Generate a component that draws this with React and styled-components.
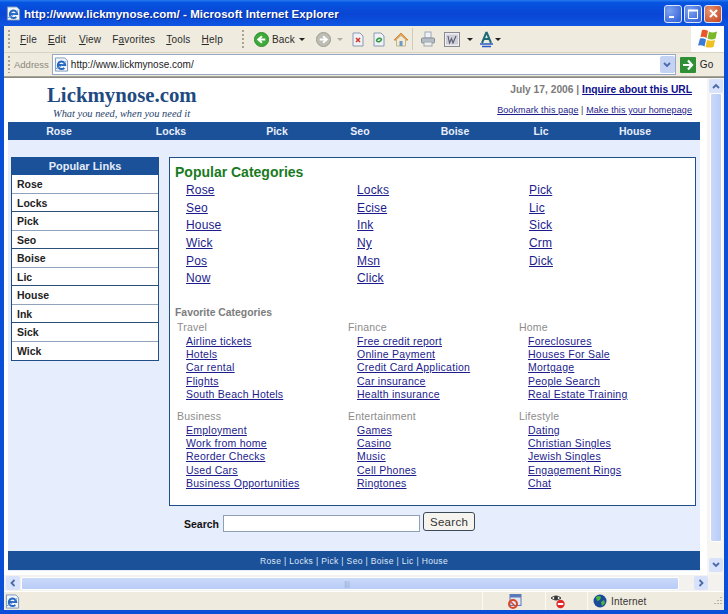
import styled, { createGlobalStyle } from 'styled-components';

const GlobalStyle = createGlobalStyle`
  html, body { margin: 0; padding: 0; background: #0a4fd8; }
  * { box-sizing: border-box; }
`;

const sans = `"Liberation Sans", Arial, sans-serif`;
const linkBlue = '#1c1c8c';

const navItems = [['Rose', 102], ['Locks', 122], ['Pick', 90], ['Seo', 76], ['Boise', 114], ['Lic', 58], ['House', 130]];
const sideLinks = ['Rose', 'Locks', 'Pick', 'Seo', 'Boise', 'Lic', 'House', 'Ink', 'Sick', 'Wick'];
const popular = ['Rose', 'Locks', 'Pick', 'Seo', 'Ecise', 'Lic', 'House', 'Ink', 'Sick', 'Wick', 'Ny', 'Crm', 'Pos', 'Msn', 'Dick', 'Now', 'Click'];
const favorites = [
  { title: 'Travel', links: ['Airline tickets', 'Hotels', 'Car rental', 'Flights', 'South Beach Hotels'] },
  { title: 'Finance', links: ['Free credit report', 'Online Payment', 'Credit Card Application', 'Car insurance', 'Health insurance'] },
  { title: 'Home', links: ['Foreclosures', 'Houses For Sale', 'Mortgage', 'People Search', 'Real Estate Training'] },
  { title: 'Business', links: ['Employment', 'Work from home', 'Reorder Checks', 'Used Cars', 'Business Opportunities'] },
  { title: 'Entertainment', links: ['Games', 'Casino', 'Music', 'Cell Phones', 'Ringtones'] },
  { title: 'Lifestyle', links: ['Dating', 'Christian Singles', 'Jewish Singles', 'Engagement Rings', 'Chat'] },
];

const Win = styled.div`
  width: 728px;
  height: 614px;
  display: flex;
  flex-direction: column;
  overflow: hidden;
  font-family: ${sans};
  background: #0a4fd8;
  padding: 0 4px 4px;
`;

const TitleBar = styled.div`
  height: 26px;
  margin: 0 -4px;
  padding: 1px 6px 0 6px;
  display: flex;
  align-items: center;
  background: linear-gradient(180deg, #2a7af0 0%, #0554e0 10%, #0a45d4 55%, #0c56e2 100%);
`;

const TitleText = styled.div`
  flex: 1;
  margin-left: 3px;
  color: #fff;
  font-size: 11.5px;
  font-weight: bold;
  letter-spacing: 0.06px;
  text-shadow: 1px 1px 0 #0a2a8a;
  white-space: nowrap;
`;

const WinButton = styled.div`
  width: 18px;
  height: 18px;
  margin-left: 2px;
  border: 1px solid #dce6fa;
  border-radius: 3px;
  display: flex;
  align-items: center;
  justify-content: center;
  background: ${p => (p.$close
    ? 'radial-gradient(circle at 30% 30%, #e8926e, #c4421e)'
    : 'radial-gradient(circle at 30% 30%, #7da2ee, #2a5ad8)')};
`;

const MenuRow = styled.div`
  height: 27px;
  display: flex;
  background: #efebde;
  border-bottom: 1px solid #d8d4c4;
`;

const Grip = styled.div`
  width: 2px;
  height: ${p => p.$h || 19}px;
  margin-left: ${p => p.$ml || 0}px;
  align-self: center;
  background: repeating-linear-gradient(180deg, #a8a493 0 2px, transparent 2px 4px);
`;

const MenuLabel = styled.span`
  margin-left: ${p => p.$ml}px;
  align-self: center;
  font-size: 10px;
  color: #2a2a2a;
  letter-spacing: 0.2px;
`;

const Tool = styled.div`
  margin-left: ${p => p.$ml || 0}px;
  align-self: center;
  display: flex;
  align-items: center;
`;

const Caret = styled.span`
  margin-left: ${p => p.$ml || 0}px;
  align-self: center;
  width: 0;
  height: 0;
  border-left: 3px solid transparent;
  border-right: 3px solid transparent;
  border-top: 3px solid ${p => p.$light ? '#b0aea2' : '#222'};
`;

const ToolSep = styled.div`
  width: 1px;
  height: 22px;
  margin-left: ${p => p.$ml}px;
  align-self: center;
  background: #cfcbba;
`;

const Spacer = styled.div`
  flex: 1;
`;

const LogoBox = styled.div`
  width: 33px;
  background: #fff;
  display: flex;
  align-items: center;
  justify-content: center;
`;

const AddressRow = styled.div`
  height: 24px;
  display: flex;
  align-items: center;
  background: #efebde;
  border-bottom: 1px solid #a5a297;
`;

const AddressLabel = styled.span`
  margin-left: 4px;
  font-size: 9.5px;
  color: #8b887c;
`;

const UrlField = styled.div`
  width: 624px;
  height: 21px;
  margin-left: 3px;
  padding-left: 1px;
  display: flex;
  align-items: center;
  gap: 2px;
  background: #fff;
  border: 1px solid #98a8c4;
  font-size: 10px;
  color: #222;
`;

const UrlText = styled.span`
  flex: 1;
`;

const Drop = styled.div`
  width: 15px;
  height: 17px;
  background: #c4d2f4;
  border-radius: 2px;
  display: flex;
  align-items: center;
  justify-content: center;
`;

const GoLabel = styled.span`
  margin-left: 4px;
  font-size: 10px;
  color: #222;
`;

const ViewRow = styled.div`
  flex: 1;
  display: flex;
  min-height: 0;
  border-top: 1px solid #8a8a80;
`;

const Page = styled.div`
  width: 703px;
  background: #fff;
  padding: 0 7px 4px 4px;
  display: flex;
  flex-direction: column;
`;

const Header = styled.div`
  height: 44px;
  display: flex;
  justify-content: space-between;
`;

const Brand = styled.div`
  padding: 5px 0 0 39px;
`;

const BrandName = styled.div`
  font-family: "Liberation Serif", "Times New Roman", serif;
  font-weight: bold;
  font-size: 20.8px;
  line-height: 24px;
  color: #1f4a82;
`;

const Tagline = styled.div`
  font-family: "Liberation Serif", "Times New Roman", serif;
  font-style: italic;
  font-size: 10.4px;
  line-height: 12px;
  margin: 1px 0 0 6px;
  color: #1f3f6e;
`;

const HeaderRight = styled.div`
  padding: 5px 8px 0 0;
  text-align: right;
`;

const DateLine = styled.div`
  font-size: 10.25px;
  line-height: 14px;
  font-weight: bold;
  color: #7a7a7a;
`;

const InquireLink = styled.a`
  color: #10108c;
  text-decoration: underline;
`;

const SmallLinks = styled.div`
  margin-top: 7px;
  font-size: 9px;
  line-height: 12px;
  color: #444;
  letter-spacing: 0.1px;
`;

const PlainLink = styled.a`
  color: ${linkBlue};
  text-decoration: underline;
`;

const NavBar = styled.div`
  height: 18px;
  display: grid;
  grid-template-columns: ${navItems.map(n => `${n[1]}px`).join(' ')};
  align-items: center;
  background: #1b5198;
`;

const NavItem = styled.div`
  text-align: center;
  font-size: 10.5px;
  font-weight: bold;
  color: #e8eefa;
`;

const Body = styled.div`
  flex: 1;
  display: flex;
  flex-direction: column;
  background: #e6edfc;
`;

const Columns = styled.div`
  display: flex;
  align-items: flex-start;
  gap: 10px;
  padding: 17px 4px 0 3px;
`;

const Sidebar = styled.div`
  width: 148px;
  border: 1px solid #1f4f86;
  border-top: none;
  background: #fff;
`;

const SideHead = styled.div`
  height: 18px;
  line-height: 18px;
  text-align: center;
  background: #1b5198;
  color: #e4ecfa;
  font-size: 11px;
  font-weight: bold;
`;

const SideLink = styled.div`
  height: 18.5px;
  line-height: 18px;
  padding-left: 5px;
  font-size: 10.5px;
  font-weight: bold;
  color: #222;
  border-bottom: 1px solid ${p => (p.$dark ? '#2a4f78' : '#8fa4bc')};
  &:last-child { border-bottom: none; }
`;

const MainBox = styled.div`
  width: 527px;
  height: 349px;
  border: 1px solid #1f4f86;
  background: #fff;
  padding: 6px 0 0 5px;
`;

const MainTitle = styled.div`
  font-size: 14px;
  line-height: 17px;
  font-weight: bold;
  color: #1a7a22;
`;

const PopularGrid = styled.div`
  display: grid;
  grid-template-columns: 171px 172px 160px;
  grid-auto-rows: 17.7px;
  margin: -1px 0 0 11px;
`;

const PopularLink = styled.a`
  font-size: 12px;
  line-height: 18px;
  letter-spacing: 0.15px;
  color: ${linkBlue};
  text-decoration: underline;
`;

const FavTitle = styled.div`
  margin-top: 20px;
  font-size: 10.4px;
  line-height: 13px;
  font-weight: bold;
  color: #7c7c7c;
`;

const FavGrid = styled.div`
  display: grid;
  grid-template-columns: 171px 171px 171px;
  row-gap: 9px;
  margin-top: 2px;
`;

const FavColumn = styled.div`
  display: flex;
  flex-direction: column;
  padding-left: 2px;
`;

const FavHead = styled.div`
  font-size: 10.5px;
  line-height: 13.6px;
  letter-spacing: 0.2px;
  color: #8c8c8c;
`;

const FavLink = styled.a`
  margin-left: 9px;
  font-size: 10.5px;
  line-height: 13.3px;
  letter-spacing: 0.25px;
  color: ${linkBlue};
  text-decoration: underline;
`;

const SearchRow = styled.div`
  display: flex;
  align-items: center;
  height: 20px;
  margin: 6px 0 0 176px;
`;

const SearchLabel = styled.span`
  font-size: 10.5px;
  font-weight: bold;
  color: #111;
  margin-top: 3px;
`;

const SearchInput = styled.input`
  width: 197px;
  height: 17px;
  margin: 3px 0 0 4px;
  padding: 0;
  border: 1px solid #8ea0b4;
  background: #fff;
`;

const SearchButton = styled.button`
  width: 52px;
  height: 19px;
  margin: -1px 0 0 3px;
  padding: 0;
  font-family: ${sans};
  font-size: 11.5px;
  letter-spacing: 0.3px;
  color: #333;
  background: #f6f4ee;
  border: 1px solid #3c4a58;
  border-radius: 3px;
`;

const Footer = styled.div`
  height: 19px;
  margin-top: 19px;
  display: flex;
  align-items: center;
  justify-content: center;
  background: #1b5198;
  color: #dfe8f8;
  font-size: 8.5px;
  letter-spacing: 0.35px;
`;

const VScroll = styled.div`
  width: 17px;
  background: #f6f5f1;
  display: flex;
  flex-direction: column;
  align-items: center;
  padding: 1px 0 3px;
`;

const ScrollBtn = styled.div`
  width: ${p => p.$w || 14}px;
  height: 14px;
  flex: none;
  background: #d8e2fa;
  border-radius: 2px;
  display: flex;
  align-items: center;
  justify-content: center;
`;

const VThumb = styled.div`
  flex: none;
  height: 449px;
  width: 12px;
  background: linear-gradient(90deg, #cbd9fa, #b8ccf6);
  border: 1px solid #fff;
  border-radius: 2px;
`;

const FlexFill = styled.div`
  flex: 1;
`;

const HScroll = styled.div`
  height: 16px;
  display: flex;
  align-items: center;
  padding: 0 16px 0 2px;
  background: #f3f2ee;
`;

const HThumb = styled.div`
  flex: 1;
  height: 13px;
  margin: 0 15px 0 1px;
  padding-right: 6px;
  display: flex;
  align-items: center;
  justify-content: center;
  background: linear-gradient(180deg, #cbd9fa, #b8ccf6);
  border: 1px solid #fff;
  border-radius: 2px;
  font-size: 7px;
  color: #8ea4cc;
`;

const StatusBar = styled.div`
  height: 19px;
  display: flex;
  align-items: center;
  background: #efebde;
  border-top: 1px solid #fff;
`;

const StatusCell = styled.div`
  width: ${p => p.$w}px;
  height: 100%;
  flex: none;
  display: flex;
  align-items: center;
  gap: 4px;
  padding-left: ${p => p.$pl || 0}px;
  border-left: ${p => (p.$first ? 'none' : '1px solid #fbfaf4')};
  font-size: 10px;
  color: #333;
  letter-spacing: 0.2px;
`;

const IeIcon = ({ size = 15 }) => (
  <svg width={size} height={size} viewBox="0 0 16 16">
    <path d="M1.5 1h10l3 3v11h-13z" fill="#f2f6fc" stroke="#7a94b8" />
    <path d="M4.5 8.5h7.5a4 4 0 1 0-1 3" fill="none" stroke="#2668c0" strokeWidth="2" />
    <path d="M2 12.5q5-1 11-8" fill="none" stroke="#5a90d4" strokeWidth="1" />
  </svg>
);

const Chevron = ({ dir = 'down', color = '#4a6aa8' }) => {
  const paths = { down: 'M2 3l3 3 3-3', up: 'M2 7l3-3 3 3', left: 'M6.5 2l-3 3 3 3', right: 'M3.5 2l3 3-3 3' };
  return (
    <svg width="10" height="10" viewBox="0 0 10 10">
      <path d={paths[dir]} fill="none" stroke={color} strokeWidth="1.8" />
    </svg>
  );
};

const BackIcon = ({ grey }) => (
  <svg width="15" height="15" viewBox="0 0 16 16">
    <circle cx="8" cy="8" r="7.5" fill={grey ? '#bdbdb4' : '#3faa3a'} stroke={grey ? '#9a9a90' : '#2a8a2a'} />
    <path d={grey ? 'M4 8h6M7.5 4.5L11.5 8l-4 3.5' : 'M12 8H6M8.5 4.5L4.5 8l4 3.5'} fill="none" stroke="#fff" strokeWidth="2" />
  </svg>
);

const DocIcon = ({ children }) => (
  <svg width="14" height="15" viewBox="0 0 14 15">
    <path d="M2 1h7l3 3v10H2z" fill="#f0f2f8" stroke="#8a9ab4" />
    {children}
  </svg>
);

const HomeIcon = () => (
  <svg width="16" height="15" viewBox="0 0 16 15">
    <path d="M1 8l7-7 7 7-2 0-5-4-5 4z" fill="#e8a050" stroke="#d08a3a" />
    <path d="M3.5 7.5V14h9V7.5L8 3.5z" fill="#f4ead4" stroke="#c4b48a" />
    <rect x="6.5" y="9" width="3" height="5" fill="#6a9ac8" />
  </svg>
);

const PrintIcon = () => (
  <svg width="16" height="16" viewBox="0 0 16 16">
    <rect x="5" y="1" width="6" height="6" fill="#eef2f8" stroke="#a0aab8" />
    <rect x="1.5" y="7" width="13" height="5" rx="1" fill="#b4bcc4" stroke="#8a9098" />
    <rect x="4" y="11" width="8" height="4" fill="#eee" stroke="#a0a8b0" />
  </svg>
);

const WordIcon = () => (
  <svg width="16" height="15" viewBox="0 0 16 15">
    <rect x="0.5" y="0.5" width="15" height="14" fill="#eeeeee" stroke="#8a8a90" />
    <rect x="2" y="2.5" width="12" height="10" fill="#cfcfda" />
    <path d="M4 4l1.5 7 2-4.5 1.5 4.5 3-7" fill="none" stroke="#5a5a70" strokeWidth="1.1" />
  </svg>
);

const AIcon = () => (
  <svg width="15" height="17" viewBox="0 0 15 17">
    <path d="M7.5 1L3 12M7.5 1L12 12M5 8h5" fill="none" stroke="#1e6a78" strokeWidth="2" />
    <path d="M1 13h13M3 15.5h9" stroke="#2a5ac8" strokeWidth="1.6" />
  </svg>
);

const WinLogo = () => (
  <svg width="22" height="20" viewBox="0 0 22 20">
    <path d="M5 1q3-1 6 1l-1.5 7q-3-2-6-1z" fill="#e8562a" />
    <path d="M12 2.5q3 2 8 0l-1.5 7q-4 2-8 0z" fill="#7ab82a" />
    <path d="M3 9.5q3-1 6 1l-1.5 7q-3-2-6.5-1z" fill="#3a7ad8" />
    <path d="M10 11q4 1.5 8 0l-1.5 7q-4 1-8 0z" fill="#f0c020" />
  </svg>
);

const GoIcon = () => (
  <svg width="16" height="16" viewBox="0 0 16 16">
    <rect width="16" height="16" rx="1" fill="#2f8f34" />
    <path d="M3 8h8M8 3.5l4 4.5-4 4.5" fill="none" stroke="#fff" strokeWidth="2.2" />
  </svg>
);

const PopupIcon = () => (
  <svg width="14" height="15" viewBox="0 0 14 15">
    <rect x="2" y="0.5" width="11" height="11" fill="#dfe6f4" stroke="#5a7ab8" />
    <rect x="2" y="0.5" width="11" height="3" fill="#5a7ab8" />
    <circle cx="5" cy="10" r="4" fill="none" stroke="#d8482a" strokeWidth="2" />
    <path d="M2.5 7.5l5 5" stroke="#d8482a" strokeWidth="1.5" />
  </svg>
);

const PrivacyIcon = () => (
  <svg width="16" height="15" viewBox="0 0 16 15">
    <path d="M1 4q5-4 10 0-5 4-10 0z" fill="#eee" stroke="#333" />
    <circle cx="6" cy="4" r="2" fill="#333" />
    <circle cx="10.5" cy="10" r="4.2" fill="#e02a2a" />
    <rect x="7.8" y="9" width="5.4" height="2" fill="#fff" />
  </svg>
);

const GlobeIcon = () => (
  <svg width="14" height="14" viewBox="0 0 14 14">
    <circle cx="7" cy="7" r="6.5" fill="#1a4a9a" />
    <path d="M3 3q3-2 5 0l-1 3-3 1zM8 8l3-2 1 3-3 3z" fill="#4ab83a" />
  </svg>
);

const SizeGrip = () => (
  <svg width="12" height="12" viewBox="0 0 12 12">
    <path d="M10 2v1M7 5v1M10 5v1M4 8v1M7 8v1M10 8v1" stroke="#b8b4a4" strokeWidth="2" />
  </svg>
);

export default function App() {
  return (
    <>
      <GlobalStyle />
      <Win>
        <TitleBar>
          <IeIcon size={15} />
          <TitleText>http://www.lickmynose.com/ - Microsoft Internet Explorer</TitleText>
          <WinButton>
            <svg width="12" height="12" viewBox="0 0 12 12"><rect x="2" y="8" width="5" height="2" fill="#fff" /></svg>
          </WinButton>
          <WinButton>
            <svg width="12" height="12" viewBox="0 0 12 12"><path d="M1.5 2.5h9v8h-9z" fill="none" stroke="#fff" /><rect x="1" y="1.5" width="10" height="2" fill="#fff" /></svg>
          </WinButton>
          <WinButton $close>
            <svg width="11" height="11" viewBox="0 0 11 11"><path d="M2 2l7 7M9 2l-7 7" stroke="#fff" strokeWidth="2" /></svg>
          </WinButton>
        </TitleBar>

        <MenuRow>
          <Grip $ml={4} />
          <MenuLabel $ml={10}><u>F</u>ile</MenuLabel>
          <MenuLabel $ml={11}><u>E</u>dit</MenuLabel>
          <MenuLabel $ml={13}><u>V</u>iew</MenuLabel>
          <MenuLabel $ml={11}>F<u>a</u>vorites</MenuLabel>
          <MenuLabel $ml={11}><u>T</u>ools</MenuLabel>
          <MenuLabel $ml={11}><u>H</u>elp</MenuLabel>
          <Grip $ml={19} />
          <Tool $ml={10}><BackIcon /></Tool>
          <MenuLabel $ml={3}>Back</MenuLabel>
          <Caret $ml={4} />
          <Tool $ml={11}><BackIcon grey /></Tool>
          <Caret $ml={6} $light />
          <Tool $ml={8}><DocIcon><path d="M5 6l4 4M9 6l-4 4" stroke="#d03a2a" strokeWidth="1.6" /></DocIcon></Tool>
          <Tool $ml={7}><DocIcon><path d="M4.5 9a3 3 0 0 1 5-2M9.5 7a3 3 0 0 1-5 2" fill="none" stroke="#2a9a3a" strokeWidth="1.6" /></DocIcon></Tool>
          <Tool $ml={7}><HomeIcon /></Tool>
          <ToolSep $ml={3} />
          <Tool $ml={7}><PrintIcon /></Tool>
          <Tool $ml={8}><WordIcon /></Tool>
          <Caret $ml={7} />
          <Tool $ml={6}><AIcon /></Tool>
          <Caret $ml={1} />
          <Spacer />
          <LogoBox><WinLogo /></LogoBox>
        </MenuRow>

        <AddressRow>
          <Grip $ml={4} $h={17} />
          <AddressLabel>Address</AddressLabel>
          <UrlField>
            <IeIcon size={15} />
            <UrlText>http://www.lickmynose.com/</UrlText>
            <Drop><Chevron dir="down" /></Drop>
          </UrlField>
          <Tool $ml={4}><GoIcon /></Tool>
          <GoLabel>Go</GoLabel>
        </AddressRow>

        <ViewRow>
          <Page>
            <Header>
              <Brand>
                <BrandName>Lickmynose.com</BrandName>
                <Tagline>What you need, when you need it</Tagline>
              </Brand>
              <HeaderRight>
                <DateLine>July 17, 2006 | <InquireLink>Inquire about this URL</InquireLink></DateLine>
                <SmallLinks><PlainLink>Bookmark this page</PlainLink> | <PlainLink>Make this your homepage</PlainLink></SmallLinks>
              </HeaderRight>
            </Header>
            <NavBar>
              {navItems.map(([name]) => <NavItem key={name}>{name}</NavItem>)}
            </NavBar>
            <Body>
              <Columns>
                <Sidebar>
                  <SideHead>Popular Links</SideHead>
                  {sideLinks.map((name, i) => <SideLink key={name} $dark={i % 2 === 1}>{name}</SideLink>)}
                </Sidebar>
                <MainBox>
                  <MainTitle>Popular Categories</MainTitle>
                  <PopularGrid>
                    {popular.map(name => <div key={name}><PopularLink>{name}</PopularLink></div>)}
                  </PopularGrid>
                  <FavTitle>Favorite Categories</FavTitle>
                  <FavGrid>
                    {favorites.map(group => (
                      <FavColumn key={group.title}>
                        <FavHead>{group.title}</FavHead>
                        {group.links.map(link => <FavLink key={link}>{link}</FavLink>)}
                      </FavColumn>
                    ))}
                  </FavGrid>
                </MainBox>
              </Columns>
              <SearchRow>
                <SearchLabel>Search</SearchLabel>
                <SearchInput />
                <SearchButton>Search</SearchButton>
              </SearchRow>
              <Footer>Rose | Locks | Pick | Seo | Boise | Lic | House</Footer>
            </Body>
          </Page>
          <VScroll>
            <ScrollBtn><Chevron dir="up" /></ScrollBtn>
            <VThumb />
            <FlexFill />
            <ScrollBtn><Chevron dir="down" /></ScrollBtn>
          </VScroll>
        </ViewRow>

        <HScroll>
          <ScrollBtn><Chevron dir="left" /></ScrollBtn>
          <HThumb>|||</HThumb>
          <ScrollBtn><Chevron dir="right" /></ScrollBtn>
        </HScroll>

        <StatusBar>
          <StatusCell $w={478} $pl={1} $first><IeIcon size={15} /></StatusCell>
          <StatusCell $w={63} $pl={25}><PopupIcon /></StatusCell>
          <StatusCell $w={42} $pl={4}><PrivacyIcon /></StatusCell>
          <StatusCell $w={124} $pl={5}><GlobeIcon />Internet</StatusCell>
          <SizeGrip />
        </StatusBar>
      </Win>
    </>
  );
}
